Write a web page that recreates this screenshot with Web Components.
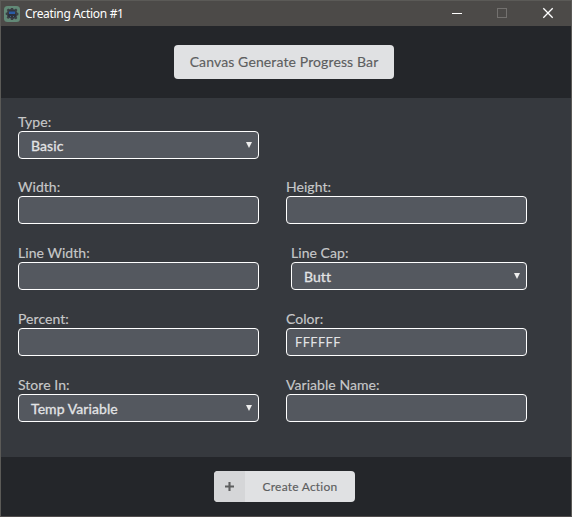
<!DOCTYPE html>
<html lang="en">
<head>
<meta charset="utf-8">
<title>Creating Action #1</title>
<style>
html,body{margin:0;height:100%;overflow:hidden;background:#24262a}
body{font-family:Lato,"Liberation Sans",sans-serif}
</style>
</head>
<body>
<app-window>
  <title-bar slot="title">Creating Action #1</title-bar>
  <action-heading slot="heading">Canvas Generate Progress Bar</action-heading>
  <form-field label="Type:" kind="select" class="full">Basic</form-field>
  <form-field label="Width:"></form-field>
  <form-field label="Height:"></form-field>
  <form-field label="Line Width:"></form-field>
  <form-field label="Line Cap:" kind="select" class="inset">Butt</form-field>
  <form-field label="Percent:"></form-field>
  <form-field label="Color:">FFFFFF</form-field>
  <form-field label="Store In:" kind="select">Temp Variable</form-field>
  <form-field label="Variable Name:"></form-field>
  <icon-button slot="footer">Create Action</icon-button>
</app-window>
<script>
class ShadowElement extends HTMLElement {
  constructor() {
    super();
    this.attachShadow({ mode: 'open' }).innerHTML = this.render();
  }
}

customElements.define('app-window', class extends ShadowElement {
  render() {
    return `<style>
      :host{display:flex;flex-direction:column;box-sizing:border-box;width:572px;height:517px;border:1px solid #5b5a57;border-bottom-color:#504c4c;background:#24262a}
      header,footer{display:flex;justify-content:center;align-items:center;flex:none}
      header{height:72px;padding-right:4px;box-sizing:border-box}
      main{flex:1;display:grid;grid-template-columns:241px 241px;grid-template-rows:65px 66px 66px 66px 46px;column-gap:27px;align-content:start;padding:15px 0 0 17px;background:#36393e}
      footer{height:59px;padding-right:3px;box-sizing:border-box}
      ::slotted(.full){grid-column:1 / -1;width:241px}
      ::slotted(.inset){margin-left:5px}
    </style>
    <slot name="title"></slot>
    <header><slot name="heading"></slot></header>
    <main><slot></slot></main>
    <footer><slot name="footer"></slot></footer>`;
  }
});

customElements.define('title-bar', class extends ShadowElement {
  render() {
    return `<style>
      :host{display:flex;align-items:center;flex:none;height:25px;background:#4c4a48;color:#fff;font:12px/16px "Noto Sans","Open Sans",sans-serif}
      svg{display:block;flex:none}
      .logo{margin:0 5px 0 3px}
      .name{flex:1;letter-spacing:-.32px;white-space:nowrap}
    </style>
    <svg class="logo" width="16" height="16" viewBox="0 0 16 16">
      <rect width="16" height="16" rx="3.5" fill="#628977"/>
      <path d="M6.8 2h2.400v1.200l1.400.3 1.400-.9 1.400 1.500-.8 1.200.5 1.300 1.300.4v2.200l-1.300.3-.5 1.300.8 1.200-1.500 1.400-1.300-.8-1.400.5V14H6.800v-1.400l-1.500-.5-1.200.8-1.500-1.400.8-1.300-.5-1.200L1.700 8.700V6.700l1.300-.3.5-1.300-.8-1.200 1.500-1.400 1.200.8 1.400-.4z" fill="#3a3e44"/>
      <path d="M5 4.500h6V7l1 1v2.500l-2 1H6l-2-1V8l1-1z" fill="#2c303b"/>
      <path d="M5 5.500h6V8H5z" fill="#2b5ca6"/>
      <path d="M6 10h1v1H6zm3 0h1v1H9z" fill="#46617f"/>
    </svg>
    <span class="name"><slot></slot></span>
    <svg width="120" height="25" viewBox="0 0 120 25" fill="none" shape-rendering="crispEdges">
      <path d="M1 12.5h10" stroke="#fff"/>
      <rect x="46.500" y="7.500" width="9" height="9" stroke="#73716f"/>
      <path d="M92.300 7.300l9.400 9.400m0-9.400l-9.400 9.400" stroke="#fff" stroke-width="1.300" shape-rendering="auto"/>
    </svg>`;
  }
});

customElements.define('action-heading', class extends ShadowElement {
  render() {
    return `<style>
      :host{display:flex;align-items:center;justify-content:center;width:220px;height:34px;border-radius:4px;background:#e0e1e3;color:#5d5e5f;font-size:14px;line-height:20px;letter-spacing:.12px;-webkit-text-stroke:.15px currentColor;white-space:nowrap}
    </style><span><slot></slot></span>`;
  }
});

customElements.define('form-field', class extends HTMLElement {
  connectedCallback() {
    if (this.shadowRoot) return;
    const select = this.getAttribute('kind') === 'select';
    this.attachShadow({ mode: 'open' }).innerHTML = `<style>
      :host{display:block;color:#c7c8c9}
      .label{font-size:14px;line-height:18px;height:18px;letter-spacing:.05px;-webkit-text-stroke:.15px currentColor;white-space:nowrap}
      .box{display:flex;align-items:center;justify-content:space-between;box-sizing:border-box;height:28px;padding:0 6px 0 8px;border:1px solid #fff;border-radius:4px;background:#54585f;color:#e3e4e6;font-size:13px;line-height:18px;letter-spacing:.3px}
      .select{padding-left:12px;font-size:14px;letter-spacing:.08px;-webkit-text-stroke:.3px currentColor}
      .select span{padding-top:2px}
      svg{display:block;margin-bottom:1px}
    </style>
    <div class="label"></div>
    <div class="box ${select ? 'select' : ''}"><span><slot></slot></span>${select ? '<svg width="6" height="6" viewBox="0 0 6 6"><path d="M0 0h6L3 6z" fill="#eee"/></svg>' : ''}</div>`;
    this.shadowRoot.querySelector('.label').textContent = this.getAttribute('label');
  }
});

customElements.define('icon-button', class extends ShadowElement {
  render() {
    return `<style>
      :host{display:flex;width:141px;height:31px;border-radius:4px;overflow:hidden;background:#e0e1e3;color:#5d5e5f;font-size:12px;line-height:31px}
      .icon{display:flex;align-items:center;justify-content:center;width:31px;background:#d5d6d8}
      .text{flex:1;text-align:center;letter-spacing:.22px;-webkit-text-stroke:.15px currentColor;white-space:nowrap}
    </style>
    <span class="icon"><svg width="9" height="9" viewBox="0 0 9 9"><path d="M4.500 0v9M0 4.500h9" stroke="#5d5e5f" stroke-width="2.100"/></svg></span>
    <span class="text"><slot></slot></span>`;
  }
});
</script>
</body>
</html>
